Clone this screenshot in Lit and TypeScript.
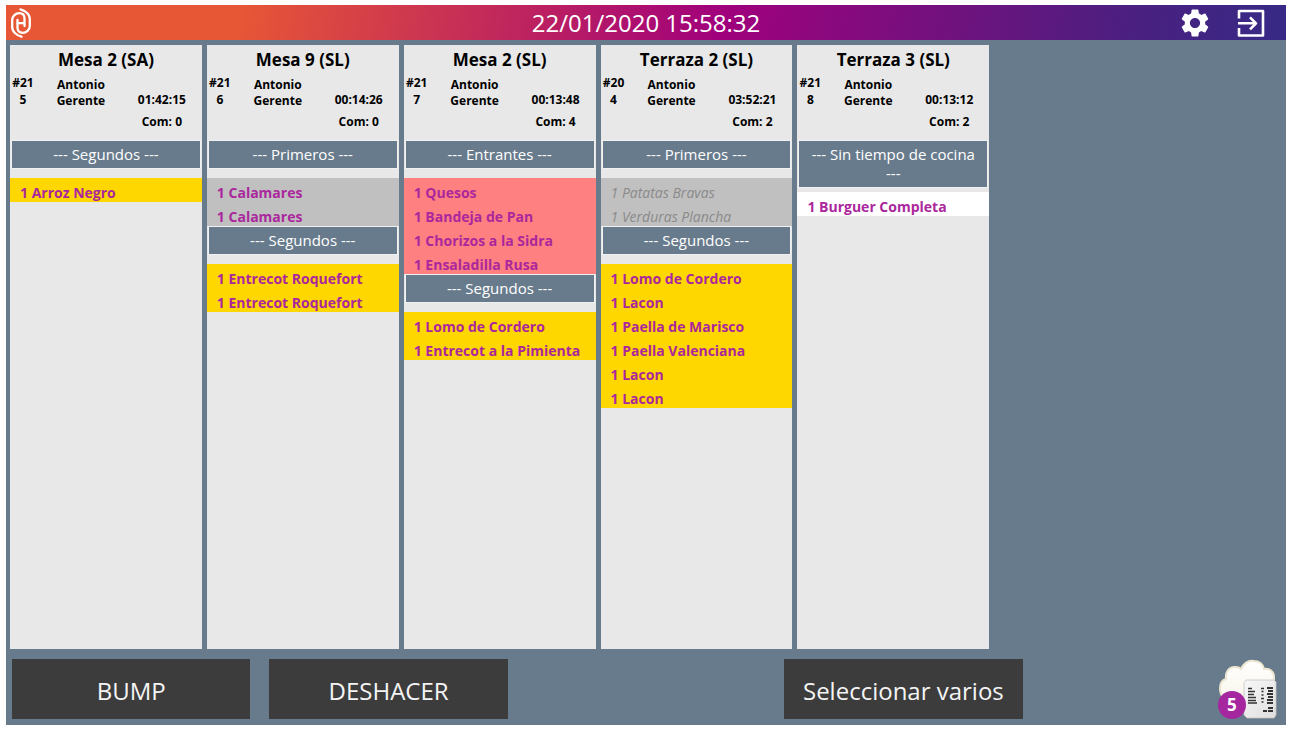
import { LitElement, html, css, svg } from "lit";
import { customElement, property, state } from "lit/decorators.js";

type Tone = "gold" | "silver" | "coral" | "plain" | "served";

interface Course {
  name: string;
  tone: Tone;
  dishes: string[];
}

interface Ticket {
  table: string;
  number: string;
  waiter: string;
  elapsed: string;
  guests: number;
  courses: Course[];
}

const TICKETS: Ticket[] = [
  {
    table: "Mesa 2 (SA)", number: "#215", waiter: "Antonio Gerente", elapsed: "01:42:15", guests: 0,
    courses: [{ name: "Segundos", tone: "gold", dishes: ["Arroz Negro"] }],
  },
  {
    table: "Mesa 9 (SL)", number: "#216", waiter: "Antonio Gerente", elapsed: "00:14:26", guests: 0,
    courses: [
      { name: "Primeros", tone: "silver", dishes: ["Calamares", "Calamares"] },
      { name: "Segundos", tone: "gold", dishes: ["Entrecot Roquefort", "Entrecot Roquefort"] },
    ],
  },
  {
    table: "Mesa 2 (SL)", number: "#217", waiter: "Antonio Gerente", elapsed: "00:13:48", guests: 4,
    courses: [
      { name: "Entrantes", tone: "coral", dishes: ["Quesos", "Bandeja de Pan", "Chorizos a la Sidra", "Ensaladilla Rusa"] },
      { name: "Segundos", tone: "gold", dishes: ["Lomo de Cordero", "Entrecot a la Pimienta"] },
    ],
  },
  {
    table: "Terraza 2 (SL)", number: "#204", waiter: "Antonio Gerente", elapsed: "03:52:21", guests: 2,
    courses: [
      { name: "Primeros", tone: "served", dishes: ["Patatas Bravas", "Verduras Plancha"] },
      { name: "Segundos", tone: "gold", dishes: ["Lomo de Cordero", "Lacon", "Paella de Marisco", "Paella Valenciana", "Lacon", "Lacon"] },
    ],
  },
  {
    table: "Terraza 3 (SL)", number: "#218", waiter: "Antonio Gerente", elapsed: "00:13:12", guests: 2,
    courses: [{ name: "Sin tiempo de cocina", tone: "plain", dishes: ["Burguer Completa"] }],
  },
];

@customElement("kitchen-ticket")
export class KitchenTicket extends LitElement {
  @property({ attribute: false }) ticket!: Ticket;

  static styles = css`
    :host { display: block; background: #e8e8e8; color: #000; overflow: hidden; }
    .head { height: 95px; box-sizing: border-box; padding-top: 3px; text-align: center; font-weight: 700; }
    .table { margin: 0; font-size: 17px; line-height: 24px; }
    .meta { display: grid; grid-template-columns: 26fr 90fr 76fr; font-size: 12px; }
    .number { padding-top: 2px; line-height: 17px; word-break: break-all; }
    .waiter { padding: 5px 16px 0; line-height: 16px; }
    .times { padding: 17px 4px 0 0; line-height: 22px; }
    .course { min-height: 38px; box-sizing: border-box; padding: 1px 2px 5px; }
    .name {
      margin: 0; padding: 4px 10px; background: #687b8c; color: #fff; outline: 1px solid #eff1f3;
      font-size: 15px; font-weight: 400; line-height: 19px; text-align: center;
    }
    .dishes { margin: 0; padding: 0; list-style: none; font-size: 14px; font-weight: 700; color: #ab279d; }
    .dish { padding: 6px 0 0 10px; line-height: 18px; white-space: nowrap; }
    .gold { background: #ffd700; }
    .silver { background: #c0c0c0; }
    .coral { background: #ff8080; }
    .plain { background: #fff; }
    .served { background: #c0c0c0; color: #8a8a8a; font-weight: 400; font-style: italic; }
  `;

  render() {
    const t = this.ticket;
    return html`
      <header class="head">
        <h2 class="table">${t.table}</h2>
        <div class="meta">
          <div class="number">${t.number}</div>
          <div class="waiter">${t.waiter}</div>
          <div class="times"><div>${t.elapsed}</div><div>Com: ${t.guests}</div></div>
        </div>
      </header>
      ${t.courses.map((c) => html`
        <div class="course"><h3 class="name">--- ${c.name} ---</h3></div>
        <ul class="dishes ${c.tone}">${c.dishes.map((d) => html`<li class="dish">1 ${d}</li>`)}</ul>
      `)}
    `;
  }
}

const logo = svg`
  <svg class="logo" viewBox="0 0 22 30" fill="none" stroke="#fff" stroke-width="2.3" stroke-linecap="round" stroke-linejoin="round">
    <path d="M10.500 1.300C15 2.500 19.800 6 19.800 11v7c0 4-3.500 6.800-7 6.800-3.300 0-5.300-2-5.300-5V12"/>
    <path d="M11.500 28.700C7 27.500 2.200 24 2.200 19v-7c0-4 3.500-6.800 7-6.800 3.300 0 5.300 2 5.300 5V18M7.500 15.200h7"/>
  </svg>`;

const gear = svg`
  <svg class="icon" viewBox="0 0 24 24" fill="#fff">
    <path d="M19.140 12.940c.04-.3.06-.61.06-.94 0-.32-.02-.64-.07-.94l2.030-1.580c.18-.14.23-.41.12-.61l-1.920-3.320c-.12-.22-.37-.29-.59-.22l-2.390.96c-.5-.38-1.030-.7-1.620-.94l-.36-2.540c-.04-.24-.24-.41-.48-.41h-3.840c-.24 0-.43.17-.47.41l-.36 2.540c-.59.24-1.130.57-1.620.94l-2.390-.96c-.22-.08-.47 0-.59.22L2.740 8.870c-.12.21-.08.47.12.61l2.030 1.580c-.05.3-.09.63-.09.94s.02.64.07.94l-2.030 1.580c-.18.14-.23.41-.12.61l1.920 3.320c.12.22.37.29.59.22l2.390-.96c.5.38 1.030.7 1.620.94l.36 2.540c.05.24.24.41.48.41h3.840c.24 0 .44-.17.47-.41l.36-2.540c.59-.24 1.130-.56 1.620-.94l2.390.96c.22.08.47 0 .59-.22l1.920-3.320c.12-.22.07-.47-.12-.61l-2.010-1.580zM12 15.600c-1.980 0-3.600-1.620-3.600-3.600s1.620-3.600 3.600-3.600 3.600 1.620 3.600 3.600-1.620 3.600-3.600 3.600z"/>
  </svg>`;

const exit = svg`
  <svg class="icon" viewBox="0 0 34 34" fill="none" stroke="#fff" stroke-width="2.600" stroke-linejoin="round">
    <path d="M5 12.500V5h24v24.500H5V22M4 17.300h17.500M16 11.300l6 6-6 6"/>
  </svg>`;

const cloud = svg`
  <svg class="cloud" viewBox="0 0 60 60">
    <defs>
      <linearGradient id="puff" x1="0" y1="0" x2="0" y2="1">
        <stop offset="0" stop-color="#fff"/><stop offset="1" stop-color="#f8f5ea"/>
      </linearGradient>
      <linearGradient id="paper" x1="0" y1="0" x2="1" y2="1">
        <stop offset="0" stop-color="#f8f8f8"/><stop offset="1" stop-color="#dedede"/>
      </linearGradient>
    </defs>
    <path d="M14 42C6 41 2 36 2 29c0-4 2-8 6-9C7 13 11 7 18 8c2 0 4 1 5 2C26 4 30 1 36 2c5 0 9 3 10 8 6-1 10 3 10 8v24z" fill="url(#puff)" stroke="#ece6d0" stroke-width="2"/>
    <path d="M28 21h28l2 2v33l-2 3H29l-3-3V24z" fill="url(#paper)" stroke="#c4c4c4" stroke-width=".8"/>
    <g stroke="#333" stroke-width="1.800">
      <path d="M30 29.500h4M30 32.500h7M30 35.500h6M30 38.500h8M30 41.500h8M30 44h9" stroke-width="1.300"/>
      <path d="M43 29.500h3M43.500 32.500h2M43.500 36h2M43 39.500h3M43.500 43h2" stroke-width="1.300"/>
      <path d="M49 29h6M50 32h5M49 35h6M50 38h5M49 41h6M49 44h6M50 49h5M45 52h4M50 52h5"/>
    </g>
  </svg>`;

@customElement("app-root")
export class AppRoot extends LitElement {
  @state() private tickets = TICKETS;
  @state() private pending = 5;

  static styles = css`
    :host {
      display: block; box-sizing: border-box; height: 100vh; padding: 5px 4px 5px 6px;
      background: #fff; font-family: "Open Sans", "Noto Sans", sans-serif;
    }
    .screen { display: flex; flex-direction: column; height: 100%; background: #687b8c; }
    .bar {
      display: grid; grid-template-columns: 1fr auto 1fr; align-items: center; height: 35px; flex: none;
      padding: 0 4px; color: #fff;
      background: linear-gradient(100deg, #e85735 0%, #e85735 18%, #a0007c 56%, #4a2080 88%, #372a86 100%);
    }
    .logo { display: block; width: 22px; height: 30px; }
    .clock { font-size: 24px; line-height: 35px; }
    .tools { display: flex; justify-content: flex-end; gap: 22px; padding-right: 14px; }
    .tool { display: block; border: 0; padding: 0; background: none; cursor: pointer; }
    .icon { display: block; width: 34px; height: 34px; }
    .board {
      flex: 1; min-height: 0; display: grid; gap: 5px; padding: 5px 4px 0;
      grid-template-columns: repeat(5, minmax(0, 2fr)) minmax(0, 3fr);
    }
    .actions {
      flex: none; display: grid; grid-template-columns: repeat(5, minmax(0, 1fr)); gap: 19px;
      padding: 10px 6px;
      padding-bottom: 6px;
    }
    .action {
      height: 60px; border: 0; padding: 2px 0 0; background: #3c3c3c; color: #f4f4f4;
      font: inherit; font-size: 24px; cursor: pointer;
    }
    .multi { grid-column: 4; }
    .queue {
      position: relative; justify-self: end; width: 62px; height: 60px; border: 0; padding: 0;
      background: none; font: inherit; cursor: pointer;
    }
    .cloud { display: block; width: 60px; height: 60px; }
    .count {
      position: absolute; left: 0; bottom: 0; width: 28px; height: 28px; border-radius: 50%;
      background: #a626a0; color: #fff; font-size: 17px; font-weight: 700; line-height: 28px; text-align: center;
    }
  `;

  render() {
    return html`
      <div class="screen">
        <header class="bar">
          ${logo}
          <time class="clock">22/01/2020 15:58:32</time>
          <div class="tools">
            <button class="tool" aria-label="Ajustes">${gear}</button>
            <button class="tool" aria-label="Salir">${exit}</button>
          </div>
        </header>
        <main class="board">
          ${this.tickets.map((t) => html`<kitchen-ticket .ticket=${t}></kitchen-ticket>`)}
        </main>
        <footer class="actions">
          <button class="action">BUMP</button>
          <button class="action">DESHACER</button>
          <button class="action multi">Seleccionar varios</button>
          <button class="queue" aria-label="Tickets pendientes">${cloud}<span class="count">${this.pending}</span></button>
        </footer>
      </div>
    `;
  }
}
